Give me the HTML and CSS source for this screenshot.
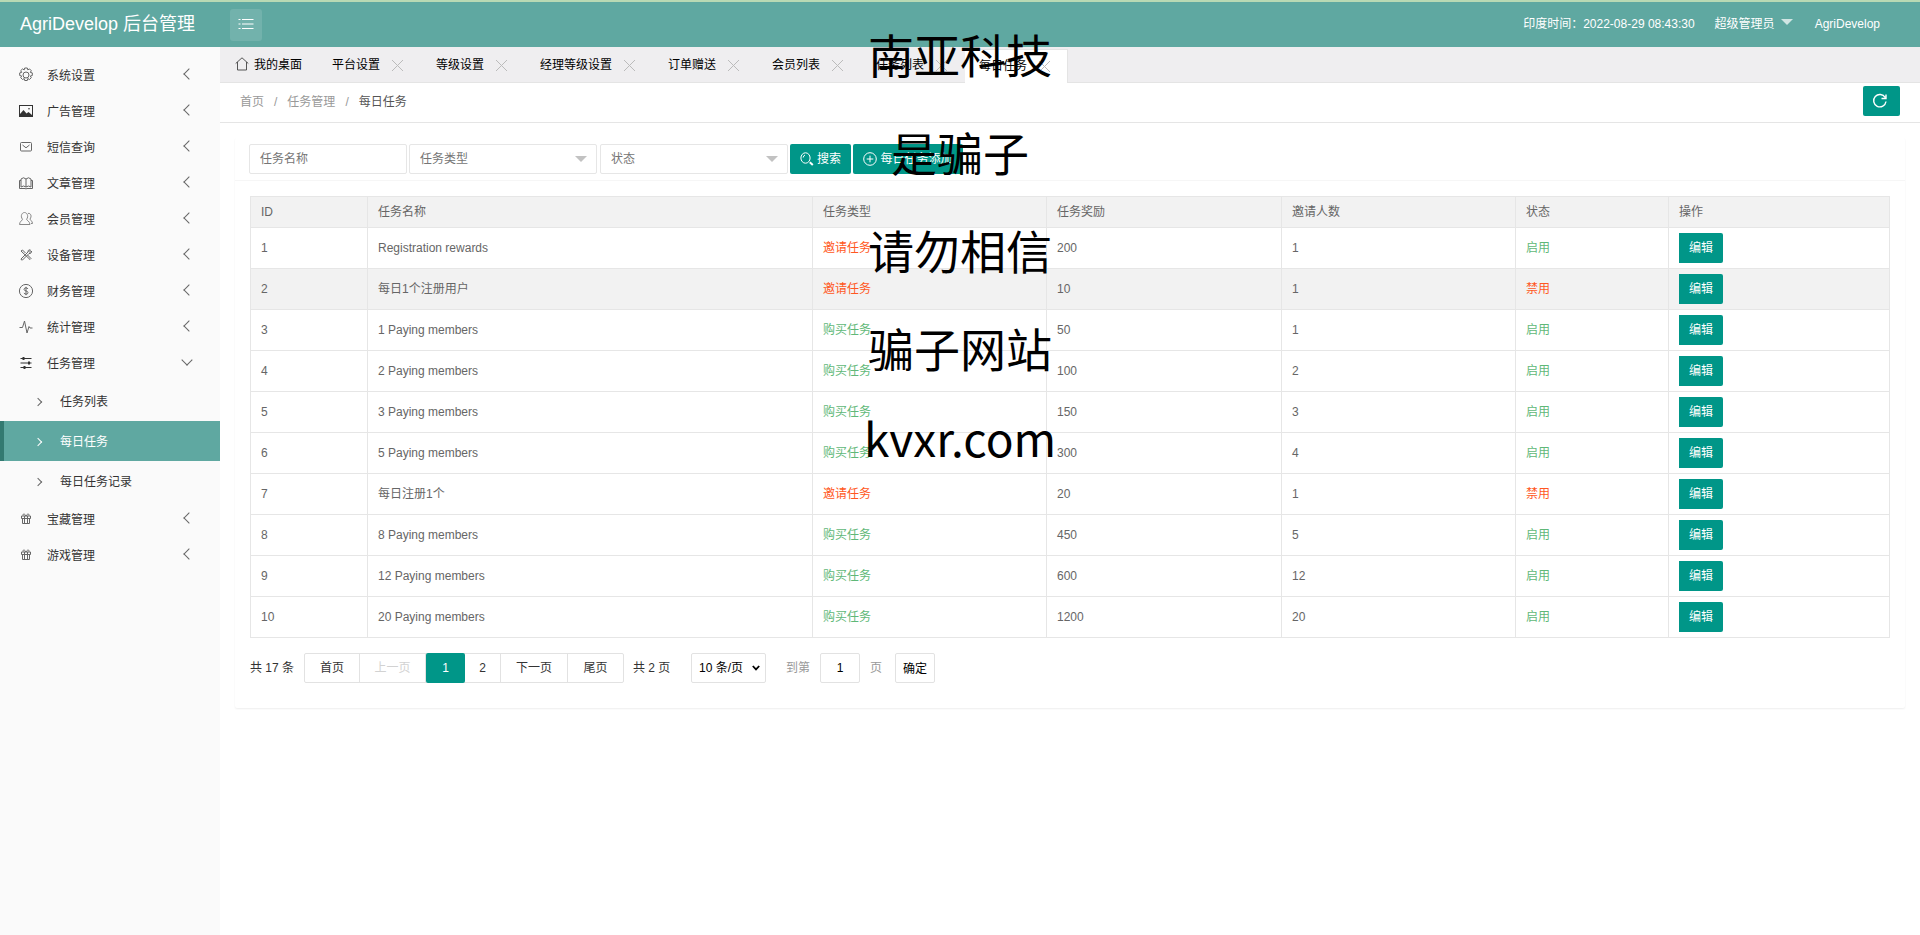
FILE: index.html
```html
<!DOCTYPE html>
<html lang="zh-CN">
<head>
<meta charset="utf-8">
<title>AgriDevelop 后台管理</title>
<link rel="stylesheet" href="styles.css">
</head>
<body>
<header class="topbar">
  <div class="logo">AgriDevelop 后台管理</div>
  <button class="menu-toggle"><svg class="icon" width="16" height="12" viewBox="0 0 16 12"><path d="M4 1.500h11.500M4 6h11.500M4 10.500h11.500M.5 1.500h2M.5 6h2M.5 10.500h2"/></svg></button>
  <div class="clock">印度时间：2022-08-29 08:43:30</div>
  <div class="role">超级管理员<span class="caret caret-light"></span></div>
  <div class="user">AgriDevelop</div>
</header>
<div class="layout">
  <nav class="sidebar">
    <a class="item"><svg class="icon" width="16" height="16" viewBox="0 0 16 16"><circle cx="8" cy="8" r="3"/><path d="M6.700 1h2.600l.5 1.900 1.700-1 1.800 1.800-1 1.700 2 .5v2.600l-2 .5 1 1.700-1.800 1.800-1.700-1-.5 2H6.700l-.5-2-1.700 1-1.800-1.800 1-1.700-2-.5V5.900l2-.5-1-1.700 1.800-1.800 1.700 1z"/></svg><span>系统设置</span><i class="arrow"></i></a>
    <a class="item"><svg class="icon dark" width="16" height="16" viewBox="0 0 16 16"><rect x="1.500" y="2.500" width="13" height="11"/><path class="fill" d="M2 13v-2l3.500-4 3 3.500L10.500 9l3.500 3v1z"/><circle class="fill" cx="11" cy="5.700" r=".8"/></svg><span>广告管理</span><i class="arrow"></i></a>
    <a class="item"><svg class="icon" width="16" height="16" viewBox="0 0 16 16"><rect x="2.500" y="3.500" width="11" height="8.500" rx="1"/><path d="M4.500 6 8 8.800 11.500 6"/></svg><span>短信查询</span><i class="arrow"></i></a>
    <a class="item"><svg class="icon" width="16" height="16" viewBox="0 0 16 16"><path d="M8 12V4Q5.500 1.500 3 4v8q2.500-2 5 0 2.500-2 5 0V4Q10.500 1.500 8 4M3 5.500H1.500v8H7q1 .8 2 0h5.500v-8H13"/></svg><span>文章管理</span><i class="arrow"></i></a>
    <a class="item"><svg class="icon soft" width="16" height="16" viewBox="0 0 16 16"><path d="M4.500 8.300C2 5 4 1.500 6.500 1.500S11 5 8.600 8.300c0 1 3.200 2 3.400 5.200H1.500c0-3 3-4.200 3-5.200M10 2.400c3-.4 4 3 2 5.600 0 1.200 2.500 2 2.500 4.500H13"/></svg><span>会员管理</span><i class="arrow"></i></a>
    <a class="item"><svg class="icon" width="16" height="16" viewBox="0 0 16 16"><path d="m3 4 1.500-1 3 3M3 4l9 8.500 1-1L9.500 8M3.500 13 3 12l7-7c0-2 1-2.500 2.500-2L11 4.500l1 1L13.500 4c.2 2-1 2.800-2.500 2.500L4.500 13z"/></svg><span>设备管理</span><i class="arrow"></i></a>
    <a class="item"><svg class="icon" width="16" height="16" viewBox="0 0 16 16"><circle cx="8" cy="8" r="6.600"/><path d="M10 6C9.500 4.300 6 4.500 6 6.300 6 8.500 10 7.300 10 9.700c0 2-3.600 2-4 .2M8 3.800v8.400"/></svg><span>财务管理</span><i class="arrow"></i></a>
    <a class="item"><svg class="icon" width="16" height="16" viewBox="0 0 16 16"><path d="M1.500 8.500h3l2-6.500 2.500 12 2-6.500 1 1.500h2.500"/></svg><span>统计管理</span><i class="arrow"></i></a>
    <a class="item"><svg class="icon dark" width="16" height="16" viewBox="0 0 16 16"><path d="M2.500 3.500h11M2.500 8h11M2.500 12.500h11"/><path class="fill" d="M4.500 2h2v3h-2zM10 6.500h2v3h-2zM5.500 11h2v3h-2z"/></svg><span>任务管理</span><i class="arrow down"></i></a>
    <a class="sub"><i class="arrow right"></i>任务列表</a>
    <a class="sub current"><i class="arrow right"></i>每日任务</a>
    <a class="sub"><i class="arrow right"></i>每日任务记录</a>
    <a class="item"><svg class="icon" width="16" height="16" viewBox="0 0 16 16"><path d="M4.500 7.500v5h7v-5M3.500 5h9v2.500h-9zM6.500 5v7.500M9.500 5v7.500M8 5C7 2.500 4.500 2.500 5 4.500M8 5c1-2.500 3.500-2.500 3-.5"/></svg><span>宝藏管理</span><i class="arrow"></i></a>
    <a class="item"><svg class="icon" width="16" height="16" viewBox="0 0 16 16"><path d="M4.500 7.500v5h7v-5M3.500 5h9v2.500h-9zM6.500 5v7.500M9.500 5v7.500M8 5C7 2.500 4.500 2.500 5 4.500M8 5c1-2.500 3.500-2.500 3-.5"/></svg><span>游戏管理</span><i class="arrow"></i></a>
  </nav>
  <main class="main">
    <div class="tabs">
      <div class="tab home"><svg class="icon" width="14" height="14" viewBox="0 0 14 14"><path d="M.7 6.500 7 .8l6.300 5.700M2.500 5v8h9V5"/></svg>我的桌面</div>
      <div class="tab">平台设置<i class="close"></i></div>
      <div class="tab">等级设置<i class="close"></i></div>
      <div class="tab">经理等级设置<i class="close"></i></div>
      <div class="tab">订单赠送<i class="close"></i></div>
      <div class="tab">会员列表<i class="close"></i></div>
      <div class="tab">任务列表<i class="close"></i></div>
      <div class="tab active">每日任务<i class="close"></i></div>
    </div>
    <div class="crumbs">
      <span>首页</span><span class="sep">/</span><span>任务管理</span><span class="sep">/</span><span class="here">每日任务</span>
      <button class="btn refresh"><svg class="icon" width="16" height="16" viewBox="0 0 16 16"><path d="M13.200 4.500A6.200 6.200 0 1 0 14 8.500M14 1.500v4H9.500"/></svg></button>
    </div>
    <section class="card">
      <div class="filters">
        <div class="field name">任务名称</div>
        <div class="field select">任务类型<span class="caret"></span></div>
        <div class="field select state">状态<span class="caret"></span></div>
        <button class="btn search"><svg class="icon" width="14" height="14" viewBox="0 0 14 14"><ellipse cx="5.500" cy="6" rx="4.600" ry="5.200"/><path d="M3.200 5.500Q3.500 3.500 5 3"/><path class="handle" d="m9.800 10.200 3 2.700"/></svg>搜索</button>
        <button class="btn add"><svg class="icon" width="14" height="14" viewBox="0 0 14 14"><circle cx="7" cy="7" r="6.300"/><path d="M7 3.700v6.600M3.700 7h6.600"/></svg>每日任务添加</button>
      </div>
      <div class="body">
        <table class="grid">
          <colgroup><col class="c-id"><col class="c-name"><col class="c-type"><col class="c-reward"><col class="c-invite"><col class="c-state"><col class="c-action"></colgroup>
          <thead><tr><th>ID</th><th>任务名称</th><th>任务类型</th><th>任务奖励</th><th>邀请人数</th><th>状态</th><th>操作</th></tr></thead>
          <tbody>
            <tr><td>1</td><td>Registration rewards</td><td class="red">邀请任务</td><td>200</td><td>1</td><td class="green">启用</td><td><button class="btn edit">编辑</button></td></tr>
            <tr class="hover"><td>2</td><td>每日1个注册用户</td><td class="red">邀请任务</td><td>10</td><td>1</td><td class="red">禁用</td><td><button class="btn edit">编辑</button></td></tr>
            <tr><td>3</td><td>1 Paying members</td><td class="green">购买任务</td><td>50</td><td>1</td><td class="green">启用</td><td><button class="btn edit">编辑</button></td></tr>
            <tr><td>4</td><td>2 Paying members</td><td class="green">购买任务</td><td>100</td><td>2</td><td class="green">启用</td><td><button class="btn edit">编辑</button></td></tr>
            <tr><td>5</td><td>3 Paying members</td><td class="green">购买任务</td><td>150</td><td>3</td><td class="green">启用</td><td><button class="btn edit">编辑</button></td></tr>
            <tr><td>6</td><td>5 Paying members</td><td class="green">购买任务</td><td>300</td><td>4</td><td class="green">启用</td><td><button class="btn edit">编辑</button></td></tr>
            <tr><td>7</td><td>每日注册1个</td><td class="red">邀请任务</td><td>20</td><td>1</td><td class="red">禁用</td><td><button class="btn edit">编辑</button></td></tr>
            <tr><td>8</td><td>8 Paying members</td><td class="green">购买任务</td><td>450</td><td>5</td><td class="green">启用</td><td><button class="btn edit">编辑</button></td></tr>
            <tr><td>9</td><td>12 Paying members</td><td class="green">购买任务</td><td>600</td><td>12</td><td class="green">启用</td><td><button class="btn edit">编辑</button></td></tr>
            <tr><td>10</td><td>20 Paying members</td><td class="green">购买任务</td><td>1200</td><td>20</td><td class="green">启用</td><td><button class="btn edit">编辑</button></td></tr>
          </tbody>
        </table>
        <div class="pager">
          <span class="total">共 17 条</span>
          <div class="pages"><a class="first">首页</a><a class="prev">上一页</a><a class="num on">1</a><a class="num">2</a><a class="next">下一页</a><a class="last">尾页</a></div>
          <span class="count">共 2 页</span>
          <div class="size">10 条/页<svg class="icon" width="8" height="6" viewBox="0 0 8 6"><path d="m.8 1 3.200 3.400L7.200 1"/></svg></div>
          <span class="muted">到第</span>
          <div class="jump">1</div>
          <span class="muted">页</span>
          <button class="confirm">确定</button>
        </div>
      </div>
    </section>
  </main>
</div>
<div class="overlay">
  <p>南亚科技</p>
  <p>是骗子</p>
  <p>请勿相信</p>
  <p>骗子网站</p>
  <p class="domain">kvxr.com</p>
</div>
</body>
</html>
```
FILE: styles.css
```css
* { box-sizing: border-box; }
body {
  margin: 0;
  height: 935px;
  overflow: hidden;
  background: #fff;
  color: #666;
  font: 12px/20px "Liberation Sans", "Noto Sans CJK SC", sans-serif;
}
button { font: inherit; border: 0; padding: 0; }
.icon { fill: none; stroke: currentColor; stroke-width: 1; flex: none; }
.icon .fill { fill: currentColor; stroke: none; }

.topbar {
  display: flex;
  align-items: center;
  height: 47px;
  padding: 0 40px 0 20px;
  border-top: 2px solid #b9d9b4;
  background: #5fa8a1;
  color: #fff;
}
.logo { width: 210px; margin-top: -1px; font-size: 18px; white-space: nowrap; }
.menu-toggle {
  display: flex;
  align-items: center;
  justify-content: center;
  width: 32px;
  height: 32px;
  margin-top: 1px;
  border-radius: 3px;
  background: #72b2ac;
  color: #fff;
}
.menu-toggle .icon { margin-top: -2px; }
.clock { margin-left: auto; }
.clock, .role, .user { position: relative; top: -1px; }
.role { display: flex; align-items: center; margin: 0 22px 0 20px; }
.caret { border: 6px solid transparent; border-top-color: #c2c2c2; border-bottom: 0; }
.caret-light { margin: -3px 0 0 6px; border-top-color: #d0e5e3; }

.layout { display: flex; height: 888px; }
.sidebar { width: 220px; padding-top: 10px; background: #fafafa; color: #333; }
.item { display: flex; align-items: center; height: 36px; padding: 0 29px 0 18px; }
.item span { padding-top: 2px; }
.item .icon { color: #666; margin-right: 13px; }
.item .icon.dark { color: #333; }
.item .icon.soft { color: #888; }
.arrow {
  width: 8px;
  height: 8px;
  margin: -2px -2px 0 auto;
  border: solid #666;
  border-width: 0 0 1px 1px;
  transform: rotate(45deg);
}
.arrow.down { margin: -6px 0 0 auto; transform: rotate(-45deg); }
.arrow.right {
  width: 6px;
  height: 6px;
  margin: -1px 19px 0 0;
  border-width: 1px 1px 0 0;
}
.sub { display: flex; align-items: center; height: 40px; padding: 2px 0 0 35px; }
.sub.current {
  padding-left: 31px;
  border-left: 4px solid #337a71;
  background: #5fa8a1;
  color: #fff;
}
.current .arrow { border-color: #fff; }

.main { flex: 1; }
.tabs {
  display: flex;
  align-items: flex-end;
  height: 36px;
  border-bottom: 1px solid #e4e4e4;
  background: #efeef0;
  color: #000;
}
.tab { display: flex; align-items: center; height: 35px; padding: 1px 14px 0 15px; white-space: nowrap; }
.tab.home { width: 97px; padding: 1px 0 0 15px; gap: 5px; }
.home .icon { margin-top: -3px; color: #555; }
.tab.active {
  height: 34px;
  margin-bottom: -1px;
  padding: 0 13px 1px 14px;
  border: 1px solid #e4e4e4;
  border-width: 1px 1px 0 0;
  background: #fff;
}
.close {
  width: 11px;
  height: 11px;
  margin-left: 12px;
  margin-right: 4px;
  background:
    linear-gradient(45deg, transparent 47%, #bbb 47%, #bbb 53%, transparent 53%),
    linear-gradient(-45deg, transparent 47%, #bbb 47%, #bbb 53%, transparent 53%);
}
.crumbs {
  display: flex;
  align-items: center;
  height: 40px;
  padding: 0 20px;
  border-bottom: 1px solid #e5e5e5;
  color: #999;
}
.crumbs span { margin-top: -2px; }
.crumbs .sep { margin-left: 10px; margin-right: 10px; }
.crumbs .here { color: #555; }
.btn {
  display: flex;
  align-items: center;
  justify-content: center;
  height: 30px;
  border-radius: 2px;
  background: #009688;
  color: #fff;
}
.refresh { width: 37px; margin: -3px 0 0 auto; }
.refresh .icon { stroke-width: 1.4; margin-right: 3px; }

.card {
  height: 570px;
  margin: 15px;
  border-radius: 2px;
  box-shadow: 0 1px 2px rgba(0, 0, 0, .07);
}
.filters {
  display: flex;
  height: 43px;
  padding: 6px 14px;
  border-bottom: 1px solid #f6f6f6;
}
.field {
  display: flex;
  align-items: center;
  justify-content: space-between;
  height: 30px;
  padding: 0 10px;
  border: 1px solid #e6e6e6;
  border-radius: 2px;
  color: #757575;
}
.field.name { width: 158px; margin-right: 2px; }
.field.select { width: 188px; margin-right: 3px; padding-right: 9px; }
.field.state { margin-right: 2px; }
.search { width: 61px; gap: 3px; margin-right: 2px; }
.add { width: 110px; gap: 3px; }
.handle { stroke-width: 2; }

.body { padding: 15px; }
.grid { width: 1640px; table-layout: fixed; border-collapse: collapse; }
.c-id { width: 117px; }
.c-name { width: 445px; }
.c-type { width: 234px; }
.c-reward { width: 235px; }
.c-invite { width: 234px; }
.c-state { width: 153px; }
.c-action { width: 221px; }
.grid th, .grid td {
  height: 41px;
  padding: 0 10px;
  border: 1px solid #e6e6e6;
  text-align: left;
  font-weight: 400;
}
.grid th { height: 31px; background: #f2f2f2; }
.grid .hover td { background: #f2f2f2; }
.grid .red { color: #ff5722; }
.grid .green { color: #5fb878; }
.edit { width: 44px; border-radius: 0 2px 2px 0; }

.pager { display: flex; align-items: center; height: 30px; margin-top: 15px; color: #333; white-space: nowrap; }
.total { width: 54px; }
.pages { display: flex; height: 30px; border: 1px solid #e2e2e2; border-radius: 2px; }
.pages a { display: flex; align-items: center; justify-content: center; border-right: 1px solid #e2e2e2; }
.pages .first { width: 55px; }
.pages .prev { width: 66px; color: #d2d2d2; }
.pages .num { width: 36px; }
.pages .num.on { width: 39px; margin: -1px 0; border: 0; border-radius: 2px; background: #009688; color: #fff; }
.pages .next { width: 67px; }
.pages .last { width: 55px; border: 0; }
.count { width: 58px; margin-left: 9px; }
.size {
  display: flex;
  align-items: center;
  justify-content: space-between;
  width: 75px;
  height: 30px;
  margin-right: 20px;
  padding: 0 5px 0 7px;
  border: 1px solid #e2e2e2;
  border-radius: 2px;
  color: #000;
}
.size .icon { stroke-width: 1.8; }
.muted { color: #999; }
.jump {
  width: 40px;
  height: 30px;
  margin: 0 10px;
  border: 1px solid #e2e2e2;
  border-radius: 2px;
  line-height: 28px;
  text-align: center;
  color: #000;
}
.confirm {
  width: 40px;
  height: 30px;
  margin-left: 13px;
  padding-top: 2px;
  border: 1px solid #e2e2e2;
  border-radius: 2px;
  background: #fff;
  color: #000;
}

.overlay {
  position: absolute;
  top: 4px;
  left: 0;
  width: 1920px;
  pointer-events: none;
  color: #000;
  font: 46px/98px "Noto Sans CJK SC", sans-serif;
  text-align: center;
}
.overlay p { margin: 0; }
.overlay .domain { margin-top: -8px; }
```
